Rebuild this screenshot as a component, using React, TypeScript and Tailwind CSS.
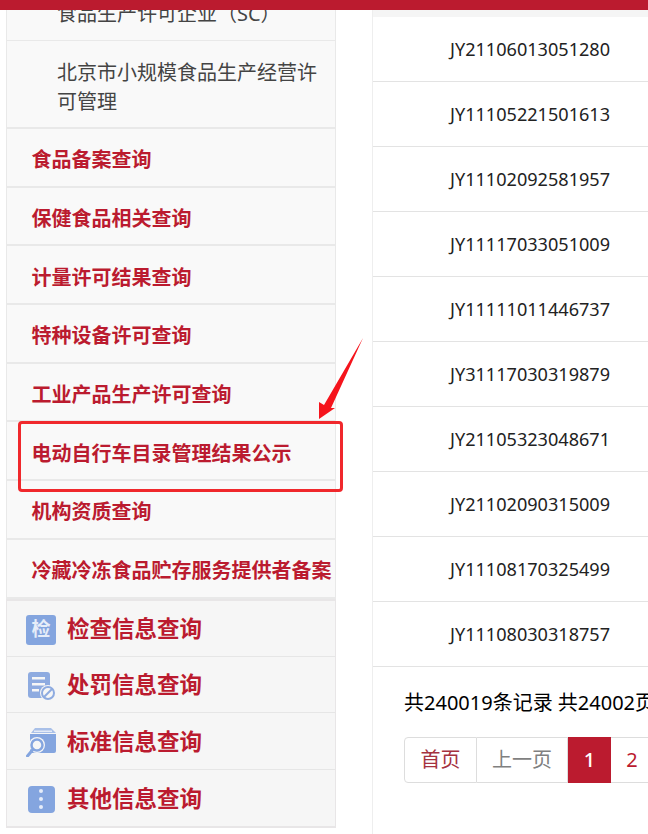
const foodItems = ["食品备案查询", "保健食品相关查询", "计量许可结果查询", "特种设备许可查询", "工业产品生产许可查询", "电动自行车目录管理结果公示", "机构资质查询", "冷藏冷冻食品贮存服务提供者备案"];

const codes = ["JY21106013051280", "JY11105221501613", "JY11102092581957", "JY11117033051009", "JY11111011446737", "JY31117030319879", "JY21105323048671", "JY21102090315009", "JY11108170325499", "JY11108030318757"];

function CheckIcon() {
  return (
    <span className="flex h-[30px] w-[30px] items-center justify-center rounded-[3px] bg-[#84a5df] text-[19px] leading-none font-bold text-[#e6edf9]">
      检
    </span>
  );
}

function PenaltyIcon() {
  return (
    <svg width="30" height="30" viewBox="0 0 30 30">
      <rect x="2" y="1" width="22" height="26" rx="3" fill="#8eabe0" />
      <rect x="6" y="6" width="13" height="2.5" fill="#f6f6f6" />
      <rect x="6" y="12" width="13" height="2.5" fill="#f6f6f6" />
      <rect x="6" y="18" width="7" height="2.5" fill="#f6f6f6" />
      <circle cx="22" cy="22" r="8" fill="#f6f6f6" />
      <circle cx="22" cy="22" r="6" fill="none" stroke="#8eabe0" strokeWidth="2" />
      <path d="M18 26 L26 18" stroke="#8eabe0" strokeWidth="2" />
    </svg>
  );
}

function StandardIcon() {
  return (
    <svg width="30" height="30" viewBox="0 0 30 30">
      <path d="M5 6 L9 1 H25 L30 6 Z" fill="#a9c0e8" />
      <path d="M8 3.5 H26 V5 H8 Z" fill="#e4ebf7" />
      <path d="M4 7 H30 V24 A2 2 0 0 1 28 26 H4 Z" fill="#84a5df" />
      <circle cx="11" cy="18" r="8" fill="#f6f6f6" />
      <circle cx="11" cy="18" r="5.5" fill="none" stroke="#84a5df" strokeWidth="2.5" />
      <path d="M6.5 23 L1.5 29" stroke="#84a5df" strokeWidth="3" strokeLinecap="round" />
    </svg>
  );
}

function OtherIcon() {
  return (
    <span className="flex h-[27px] w-[27px] flex-col items-center justify-center gap-[4px] rounded-[4px] bg-[#84a5df]">
      <i className="h-[4px] w-[4px] rounded-full bg-[#e6edf9]" />
      <i className="h-[4px] w-[4px] rounded-full bg-[#e6edf9]" />
      <i className="h-[4px] w-[4px] rounded-full bg-[#e6edf9]" />
    </span>
  );
}

const infoItems = [
  { label: "检查信息查询", icon: <CheckIcon />, height: "h-[56px]" },
  { label: "处罚信息查询", icon: <PenaltyIcon />, height: "h-[56px]" },
  { label: "标准信息查询", icon: <StandardIcon />, height: "h-[57px]" },
  { label: "其他信息查询", icon: <OtherIcon />, height: "h-[56.5px]" },
];

export default function App() {
  return (
    <div className="relative flex h-[834px] w-[648px] flex-col overflow-hidden bg-white font-['Noto_Sans','Noto_Sans_CJK_SC',sans-serif]">
      <div className="h-[10px] shrink-0 bg-[#bb1b2f]" />

      <div className="flex min-h-0 flex-1">
        {/* Sidebar */}
        <div className="ml-[6px] w-[330px] shrink-0">
          <div className="border-x border-b-2 border-[#e9e9e9] bg-[#f9f9f9]">
            <div className="flex h-[31px] flex-col justify-end overflow-hidden border-b border-[#e9e9e9] pb-[11px] pl-[50px] text-[20px] leading-[30px] text-[#444]">
              <div className="shrink-0">食品生产许可企业（SC）</div>
            </div>
            <div className="flex h-[86px] items-center pt-[6px] pr-[8px] pl-[50px] text-[20px] leading-[29px] text-[#444]">
              北京市小规模食品生产经营许可管理
            </div>
          </div>

          {foodItems.map((item) => (
            <div
              key={item}
              className="flex h-[58.7px] items-center border-x border-b-2 border-[#e9e9e9] bg-[#f9f9f9] pt-[6px] pl-[25px] text-[20px] font-bold whitespace-nowrap text-[#bb1b2f]"
            >
              <span className="-ml-[0.5px]">{item}</span>
            </div>
          ))}

          <div className="border-x border-t-2 border-b-2 border-[#e8e6e7] bg-[#f6f6f6]">
            {infoItems.map((item, i) => (
              <div
                key={item.label}
                className={`flex items-center gap-[11px] pt-[3px] pl-[19px] ${item.height} ${i < 3 ? "border-b border-[#e6e6e6]" : ""}`}
              >
                <span className="flex w-[30px] justify-center">{item.icon}</span>
                <span className="text-[22.5px] leading-none font-bold text-[#bb1b2f]">{item.label}</span>
              </div>
            ))}
          </div>
        </div>

        {/* Table panel */}
        <div className="ml-[36px] min-w-0 flex-1 border-l border-[#eeeeee]">
          <div className="h-[7px] bg-[#f5f5f5]" />
          {codes.map((code) => (
            <div
              key={code}
              className="flex h-[65px] w-[315px] items-center justify-center border-b border-[#e3e3e3] pt-[1px] pr-[1px] text-[18.1px] text-[#222]"
            >
              {code}
            </div>
          ))}
          <div className="w-[400px] pt-[22px] pl-[31px] text-[20px] leading-[28px] whitespace-nowrap text-black">
            共240019条记录 共24002页
          </div>
          <div className="mt-[20px] ml-[31px] flex h-[46px] w-[300px] text-[20px]">
            <span className="flex w-[73px] items-center justify-center rounded-l-[4px] border border-[#dddddd] text-[#a5323f]">首页</span>
            <span className="flex w-[91px] items-center justify-center border-y border-r border-[#dddddd] text-[#808080]">上一页</span>
            <span className="flex w-[43px] items-center justify-center bg-[#bb1b2f] font-medium text-white">1</span>
            <span className="flex w-[43px] items-center justify-center border-y border-r border-[#dddddd] text-[#bb1b2f]">2</span>
          </div>
        </div>
      </div>

      {/* Annotation drawn over the screenshot */}
      <div className="absolute top-[421px] left-[18px] h-[71px] w-[325px] rounded-[4px] border-[3px] border-[#f0282c]" />
      <svg className="absolute top-[336px] left-[316px]" width="50" height="86" viewBox="0 0 50 86">
        <path d="M47 2 L15 72 L19 72 L3 83 L3 66 L8 69 Z" fill="#f5141c" />
      </svg>
    </div>
  );
}
